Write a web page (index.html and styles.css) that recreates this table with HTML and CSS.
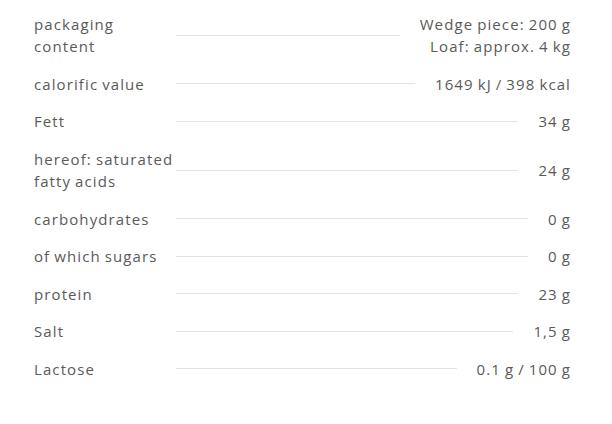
FILE: index.html
```html
<!DOCTYPE html>
<html lang="en">
<head>
    <meta charset="UTF-8">
    <meta name="viewport" content="width=device-width, initial-scale=1.0">
    <title>Nutrition facts</title>
    <link rel="stylesheet" href="styles.css">
</head>
<body>
    <dl class="facts">
        <div class="fact">
            <dt class="fact-label">packaging content</dt>
            <dd class="fact-line"></dd>
            <dd class="fact-value">Wedge piece: 200 g<br>Loaf: approx. 4 kg</dd>
        </div>
        <div class="fact">
            <dt class="fact-label">calorific value</dt>
            <dd class="fact-line"></dd>
            <dd class="fact-value">1649 kJ / 398 kcal</dd>
        </div>
        <div class="fact">
            <dt class="fact-label">Fett</dt>
            <dd class="fact-line"></dd>
            <dd class="fact-value">34 g</dd>
        </div>
        <div class="fact">
            <dt class="fact-label">hereof: saturated fatty acids</dt>
            <dd class="fact-line"></dd>
            <dd class="fact-value">24 g</dd>
        </div>
        <div class="fact">
            <dt class="fact-label">carbohydrates</dt>
            <dd class="fact-line"></dd>
            <dd class="fact-value">0 g</dd>
        </div>
        <div class="fact">
            <dt class="fact-label">of which sugars</dt>
            <dd class="fact-line"></dd>
            <dd class="fact-value">0 g</dd>
        </div>
        <div class="fact">
            <dt class="fact-label">protein</dt>
            <dd class="fact-line"></dd>
            <dd class="fact-value">23 g</dd>
        </div>
        <div class="fact">
            <dt class="fact-label">Salt</dt>
            <dd class="fact-line"></dd>
            <dd class="fact-value">1,5 g</dd>
        </div>
        <div class="fact">
            <dt class="fact-label">Lactose</dt>
            <dd class="fact-line"></dd>
            <dd class="fact-value">0.1 g / 100 g</dd>
        </div>
    </dl>
</body>
</html>
```

FILE: styles.css
```css
* {
    margin: 0;
    padding: 0;
    box-sizing: border-box;
}

body {
    background: #ffffff;
    color: #5a5a5a;
    font-family: 'Open Sans', 'DejaVu Sans', sans-serif;
    font-size: 15px;
    line-height: 22.5px;
    letter-spacing: 1.1px;
    word-spacing: -1px;
    padding: 5px 41px 0 34px;
}

/* Tableau des valeurs */
.facts {
    display: flex;
    flex-direction: column;
}

.fact {
    display: flex;
    align-items: center;
    padding: 7.5px 0;
}

.fact-label {
    flex: 0 0 142px;
}

.fact-line {
    flex: 1;
    height: 1px;
    background: #e3e3e3;
    margin-right: 20px;
}

.fact-value {
    text-align: right;
    white-space: nowrap;
}
```
